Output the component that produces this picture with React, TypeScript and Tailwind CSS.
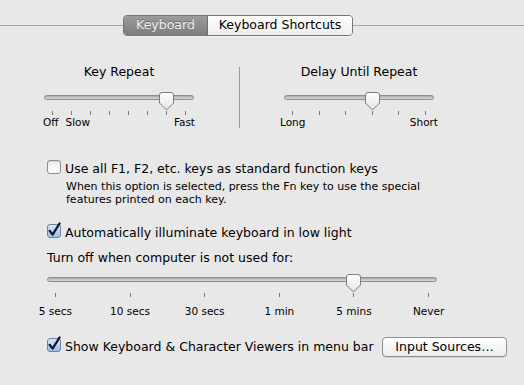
import React from "react"

function Knob() {
  return (
    <svg width="17" height="19" viewBox="0 0 17 19" className="block">
      <defs>
        <linearGradient id="knobFill" x1="0" y1="0" x2="0" y2="1">
          <stop offset="0" stopColor="#ffffff" />
          <stop offset="1" stopColor="#e4e4e4" />
        </linearGradient>
      </defs>
      <path
        d="M1.5 3 Q1.5 0.5 4 0.5 H13 Q15.5 0.5 15.5 3 V11 L8.5 18 L1.5 11 Z"
        fill="url(#knobFill)"
        stroke="#7c7c7c"
        strokeWidth="1"
      />
    </svg>
  )
}

interface SliderProps {
  className: string
  width: number
  ticks: number
  value: number
}

function Slider({ className, width, ticks, value }: SliderProps) {
  const step = (width - 17) / (ticks - 1)
  const knobLeft = value * step
  return (
    <div className={className}>
      <div className="relative h-[18px]">
        <div className="pt-[3px]">
          <div className="h-[5px] rounded-full border border-[#8d8d8d] bg-gradient-to-b from-[#ababab] to-[#dadada]" />
        </div>
        <div className="absolute top-0" style={{ left: knobLeft }}>
          <Knob />
        </div>
      </div>
      <div className="mt-px flex justify-between px-[8px]">
        {Array.from({ length: ticks }).map((_, i) => (
          <div key={i} className="h-[4px] w-px bg-[#7a7a7a]" />
        ))}
      </div>
    </div>
  )
}

function Checkbox({ checked }: { checked?: boolean }) {
  if (!checked) {
    return (
      <div className="h-[14px] w-[14px] shrink-0 rounded-[3px] border border-[#8c8c8c] bg-gradient-to-b from-[#ececec] to-white shadow-[inset_0_1px_1px_rgba(0,0,0,0.12)]" />
    )
  }
  return (
    <div className="relative h-[14px] w-[14px] shrink-0 rounded-[3px] border border-[#6b84a6] bg-gradient-to-b from-[#d6e6f8] to-[#9cc0e8]">
      <svg width="14" height="14" viewBox="0 0 14 14" className="absolute -left-px -top-px overflow-visible">
        <path d="M2.6 6.8 L5.6 10.6 L12.6 -0.6" fill="none" stroke="#141820" strokeWidth="2.2" strokeLinecap="round" strokeLinejoin="round" />
      </svg>
    </div>
  )
}

export default function App() {
  return (
    <div className="h-[385px] w-[524px] overflow-hidden bg-[#e8e8e8] font-['DejaVu_Sans',sans-serif] text-[12.5px] text-black">
      {/* Segmented tabs over the divider line */}
      <div className="flex items-center pt-[15px]">
        <div className="h-px w-[123px] bg-[#a4a4a4]" />
        <div className="flex h-[21px] overflow-hidden rounded-[4px] border border-[#767676] shadow-[0_1px_0_rgba(255,255,255,0.6)]">
          <div className="flex w-[83px] items-center justify-center bg-gradient-to-b from-[#9c9c9c] to-[#7e7e7e] text-[#efefef] [text-shadow:0_-1px_0_rgba(0,0,0,0.3)]">
            Keyboard
          </div>
          <div className="w-px bg-[#6f6f6f]" />
          <div className="flex w-[144px] items-center justify-center bg-gradient-to-b from-white to-[#eeeeee]">
            Keyboard Shortcuts
          </div>
        </div>
        <div className="h-px flex-1 bg-[#a4a4a4]" />
      </div>

      {/* Repeat sliders */}
      <div className="mt-[28px] flex pl-[44px]">
        <div className="flex w-[150px] flex-col items-center">
          <div className="leading-[16px]">Key Repeat</div>
          <Slider className="mt-[12px] w-[150px]" width={150} ticks={8} value={6} />
          <div className="-mx-px mt-px flex w-[152px] justify-between text-[10.5px] leading-[13px]">
            <div className="flex gap-[7px]">
              <span>Off</span>
              <span>Slow</span>
            </div>
            <span>Fast</span>
          </div>
        </div>
        <div className="ml-[45px] mt-[3px] h-[61px] w-px bg-[#9c9c9c]" />
        <div className="ml-[44px] flex w-[150px] flex-col items-center">
          <div className="leading-[16px]">Delay Until Repeat</div>
          <Slider className="mt-[12px] w-[150px]" width={150} ticks={6} value={3} />
          <div className="mt-px flex w-[158px] justify-between text-[10.5px] leading-[13px]">
            <span>Long</span>
            <span>Short</span>
          </div>
        </div>
      </div>

      {/* Function keys */}
      <div className="mt-[31px] flex items-start gap-[4px] pl-[47px]">
        <Checkbox />
        <div className="mt-px leading-[16px]">Use all F1, F2, etc. keys as standard function keys</div>
      </div>
      <div className="mt-[3px] pl-[66px] text-[11px] leading-[13px]">
        When this option is selected, press the Fn key to use the special
        <br />
        features printed on each key.
      </div>

      {/* Illumination */}
      <div className="mt-[18px] flex items-start gap-[4px] pl-[47px]">
        <Checkbox checked />
        <div className="mt-px leading-[16px]">Automatically illuminate keyboard in low light</div>
      </div>
      <div className="mt-[9px] pl-[47px] leading-[16px]">Turn off when computer is not used for:</div>
      <div className="pl-[47px]">
        <Slider className="mt-[8px] w-[390px]" width={390} ticks={6} value={4} />
        <div className="-ml-[29px] mt-[8px] grid w-[448px] grid-cols-6 text-center text-[10.5px] leading-[13px]">
          <span>5 secs</span>
          <span>10 secs</span>
          <span>30 secs</span>
          <span>1 min</span>
          <span>5 mins</span>
          <span>Never</span>
        </div>
      </div>

      {/* Viewers */}
      <div className="mt-[19px] flex items-start pl-[47px] pr-[17px]">
        <div className="mt-px">
          <Checkbox checked />
        </div>
        <div className="ml-[4px] mt-[2px] leading-[16px]">Show Keyboard &amp; Character Viewers in menu bar</div>
        <button className="ml-auto h-[20px] w-[125px] rounded-[4px] border border-[#8e8e8e] bg-gradient-to-b from-white to-[#ececec] leading-[18px] shadow-[0_1px_0_rgba(0,0,0,0.08)]">
          Input Sources…
        </button>
      </div>
    </div>
  )
}
